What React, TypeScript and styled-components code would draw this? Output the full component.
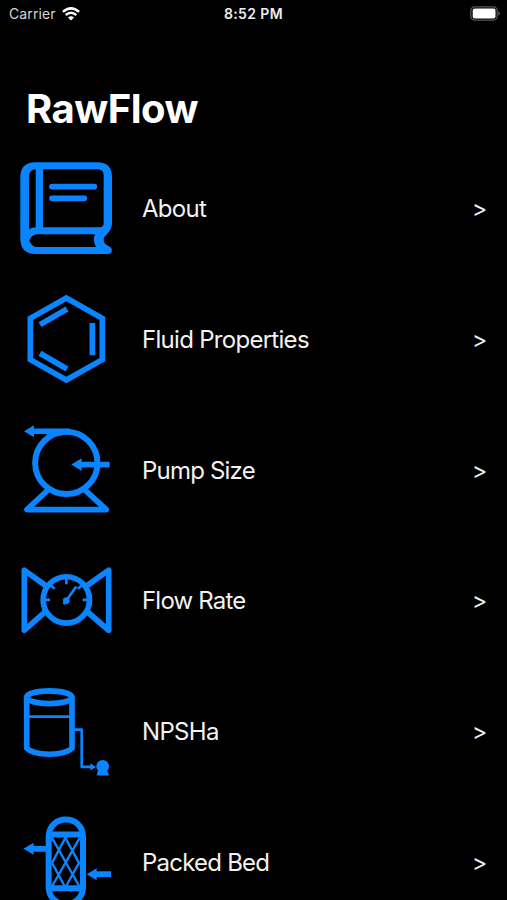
import React from "react";
import styled, { createGlobalStyle } from "styled-components";

const Global = createGlobalStyle`
  html, body { margin: 0; background: #000; overflow: hidden; }
`;

const Screen = styled.main`
  width: 507px;
  height: 900px;
  overflow: hidden;
  background: #000;
  color: #fff;
  font-family: Inter, "Liberation Sans", sans-serif;
`;

const StatusBar = styled.header`
  display: grid;
  grid-template-columns: 1fr auto 1fr;
  align-items: center;
  height: 27px;
  padding: 0 6px 0 9px;
  font-size: 14px;
  line-height: 27px;
`;

const Carrier = styled.div`
  display: flex;
  align-items: center;
  gap: 6px;
  color: #d6d6d6;
  letter-spacing: 0.1px;
`;

const Clock = styled.time`
  margin-right: 3px;
  font-weight: 600;
  color: #eee;
  letter-spacing: 0.4px;
`;

const BatterySlot = styled.div`
  display: flex;
  justify-content: flex-end;
`;

const Title = styled.h1`
  height: 50px;
  margin: 57px 0 9px;
  padding-left: 26px;
  font-size: 40px;
  font-weight: 700;
  line-height: 50px;
  letter-spacing: -0.5px;
`;

const Menu = styled.nav`
  display: flex;
  flex-direction: column;
`;

const Row = styled.a`
  display: flex;
  align-items: center;
  flex: none;
  height: 130.7px;
  padding: 0 20px 0 10px;
  color: #f2f2f2;
  font-size: 24px;
  line-height: 30px;
`;

const Glyph = styled.svg`
  flex: none;
  width: 115px;
  height: 130.7px;
  fill: none;
  stroke: #0a84ff;
  stroke-width: 17;
  stroke-linejoin: round;
`;

const Label = styled.span<{ $tracking: number }>`
  flex: 1;
  padding-top: 2px;
  margin-left: 17px;
  letter-spacing: ${(p) => p.$tracking}px;
`;

const Chevron = styled.span`
  width: 15px;
  padding-top: 2px;
  text-align: center;
  font-size: 23px;
`;

const BLUE = "#0a84ff";

const Book = () => (
  <Glyph viewBox="0 -36 345 392">
    <path
      fill={BLUE}
      fillRule="evenodd"
      stroke="none"
      d="M76 22H262Q306 22 306 66V205Q306 224 289 239Q274 252 286 267L300 276Q308 281 305 289Q303 297 294 297H76Q31 297 31 250V68Q31 22 76 22Z
         M77 43Q57 43 57 68V223Q66 217 77 217Z
         M99 43H262Q281 43 281 62V204Q281 217 269 217H99Z
         M78 238H255Q247 256 258 276H78Q66 274 58 257Q63 242 78 238Z"
    />
    <path strokeLinecap="round" d="M126 95H253M126 130H223" />
  </Glyph>
);

const Benzene = () => (
  <Glyph viewBox="0 -33.9 345 392">
    <path strokeLinejoin="miter" d="M169 38L277 99V223L169 284L61 223V99Z" />
    <path d="M90 118L171 71M247 113V210M90 204L171 251" />
  </Glyph>
);

const Pump = () => (
  <Glyph viewBox="0 -31.8 345 392">
    <circle cx="169" cy="145" r="93.5" strokeWidth="18" />
    <path d="M66 50H180M210 150H299M117 223L51 285H289L221 223" />
    <path fill={BLUE} stroke="none" d="M42 50L72 32V68ZM184 150L215 131V169ZM106 58L125 48H175V58L128 67Z" />
  </Glyph>
);

const Meter = () => (
  <Glyph viewBox="0 -44.7 345 392">
    <path d="M107 107L43 61V241L108 184M231 107L296 61V241L230 184" />
    <circle cx="169" cy="150" r="69.5" />
    <path strokeWidth="8" d="M169 86V103M105 150H120M218 150H233M124 107L134 117M214 107L204 117M161 163L199 110" />
    <circle cx="169" cy="152" r="10" fill={BLUE} stroke="none" />
  </Glyph>
);

const Tank = () => (
  <Glyph viewBox="0 -42.6 345 392">
    <ellipse cx="118" cy="51" rx="68" ry="19" />
    <path d="M50 51V204C72 228 164 228 186 204V51" />
    <path strokeWidth="8" d="M50 109H186M190 148H215V260H246" />
    <path fill={BLUE} stroke="none" d="M241 249L258 260L241 271ZM264 269H291L297 286H260Z" />
    <circle cx="278" cy="258" r="19" fill={BLUE} stroke="none" />
  </Glyph>
);

const Column = () => (
  <Glyph viewBox="0 -10.5 345 392">
    <path strokeWidth="18" d="M116 112C116 43 219 43 219 112V262C219 331 116 331 116 262ZM116 105H219M116 266H219" />
    <path strokeWidth="7" d="M126 190L166 115L207 190L166 264L126 190M126 115L210 264M209 115L124 264" />
    <path d="M68 148H109M256 224H303" />
    <path fill={BLUE} stroke="none" d="M40 148L71 130V166ZM230 224L260 206V242Z" />
  </Glyph>
);

const Wifi = () => (
  <svg width="18" height="14" viewBox="0 0 18 14" fill="none" stroke="#fff" strokeWidth="2.5">
    <path d="M.9 4.9Q9-2.1 17.1 4.9M3.7 8Q9 3.6 14.3 8" />
    <path d="M6 10.6Q9 7.8 12 10.6L9 13.6Z" fill="#fff" stroke="none" />
  </svg>
);

const Battery = () => (
  <svg width="31" height="15" viewBox="0 0 31 15">
    <rect x=".8" y=".8" width="26.4" height="13.4" rx="4" fill="none" stroke="#555" strokeWidth="1.3" />
    <rect x="2.7" y="2.6" width="22.8" height="9.8" rx="2" fill="#fff" />
    <path d="M28.3 5.2Q32 7.5 28.3 9.8Z" fill="#555" />
  </svg>
);

const items = [
  { label: "About", Icon: Book, tracking: -0.7 },
  { label: "Fluid Properties", Icon: Benzene, tracking: -0.71 },
  { label: "Pump Size", Icon: Pump, tracking: -0.8 },
  { label: "Flow Rate", Icon: Meter, tracking: -0.8 },
  { label: "NPSHa", Icon: Tank, tracking: -0.65 },
  { label: "Packed Bed", Icon: Column, tracking: -0.78 },
];

export default function App() {
  return (
    <Screen>
      <Global />
      <StatusBar>
        <Carrier>Carrier<Wifi /></Carrier>
        <Clock>8:52 PM</Clock>
        <BatterySlot><Battery /></BatterySlot>
      </StatusBar>
      <Title>RawFlow</Title>
      <Menu>
        {items.map(({ label, Icon, tracking }) => (
          <Row key={label}>
            <Icon />
            <Label $tracking={tracking}>{label}</Label>
            <Chevron>&gt;</Chevron>
          </Row>
        ))}
      </Menu>
    </Screen>
  );
}
